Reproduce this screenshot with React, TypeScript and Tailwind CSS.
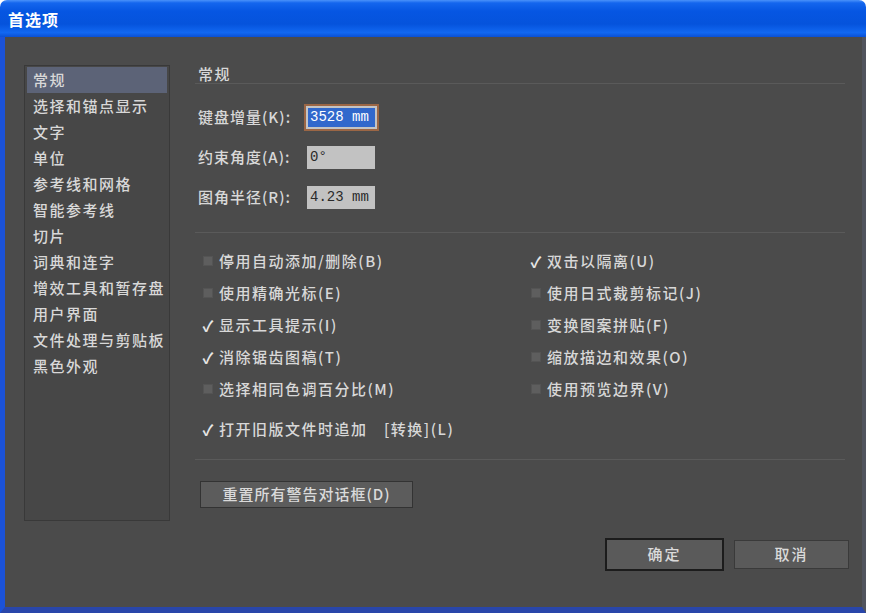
import React from "react";

const font = { fontFamily: '"Noto Sans CJK SC", "Noto Sans", sans-serif' };

const sideItems = [
  "常规",
  "选择和锚点显示",
  "文字",
  "单位",
  "参考线和网格",
  "智能参考线",
  "切片",
  "词典和连字",
  "增效工具和暂存盘",
  "用户界面",
  "文件处理与剪贴板",
  "黑色外观",
];

const leftChecks: [string, boolean][] = [
  ["停用自动添加/删除(B)", false],
  ["使用精确光标(E)", false],
  ["显示工具提示(I)", true],
  ["消除锯齿图稿(T)", true],
  ["选择相同色调百分比(M)", false],
];
const rightChecks: [string, boolean][] = [
  ["双击以隔离(U)", true],
  ["使用日式裁剪标记(J)", false],
  ["变换图案拼贴(F)", false],
  ["缩放描边和效果(O)", false],
  ["使用预览边界(V)", false],
];

function Check({ label, checked }: { label: string; checked: boolean }) {
  return (
    <div className="flex h-[32px] items-center">
      <div className="flex w-[18px] items-center justify-center">
        {checked ? (
          <span className="text-[15px] font-bold leading-none text-[#e6e6e6]">✓</span>
        ) : (
          <div className="h-[10px] w-[10px] border border-[#545454] bg-[#5e5e5e]" />
        )}
      </div>
      <span className="ml-[2px] text-[15px] font-medium tracking-[1.5px] text-[#d8d8d8]">{label}</span>
    </div>
  );
}

export default function App() {
  return (
    <div className="flex h-[613px] w-[874px] bg-white" style={font}>
      <div className="flex h-full w-[866px] flex-col">
        {/* Title bar */}
        <div
          className="flex h-[37px] items-center rounded-t-[7px] pl-[8px]"
          style={{
            background:
              "linear-gradient(to bottom, #4a92fa 0%, #1466ee 8%, #0656e2 30%, #0553dc 65%, #1168f2 88%, #0a50d4 100%)",
          }}
        >
          <span className="text-[16px] font-bold tracking-[1px] text-white">首选项</span>
        </div>
        {/* Body */}
        <div className="flex flex-1 flex-col border-b-[6px] border-l-[5px] border-r-[4px] border-b-[#2946aa] border-l-[#1b52d8] border-r-[#51545e] bg-[#4b4b4b]">
          <div className="flex pl-[19px] pt-[28px]">
            {/* Sidebar */}
            <div className="h-[456px] w-[146px] border border-[#393939] bg-[#474747] px-[2px] pt-[1px]">
              {sideItems.map((t, i) => (
                <div
                  key={t}
                  className={
                    "flex h-[26px] items-center pl-[6px] text-[15px] font-medium tracking-[1.5px] text-[#d8d8d8] " +
                    (i === 0 ? "bg-[#5c6377]" : "")
                  }
                >
                  {t}
                </div>
              ))}
            </div>
            {/* Panel */}
            <div className="ml-[25px] flex w-[650px] flex-col">
              <div className="h-[19px] border-b border-[#5a5a5a] pl-[3px] text-[15px] font-medium leading-[18px] tracking-[1.5px] text-[#d8d8d8]">
                常规
              </div>
              <div className="mt-[20px] flex flex-col gap-[13px] pl-[3px]">
                <div className="flex h-[27px] items-center">
                  <span className="w-[106px] text-[15px] font-medium tracking-[1px] text-[#d8d8d8]">键盘增量(K):</span>
                  <div className="flex h-[27px] w-[75px] items-center border-[2px] border-[#9b6645] bg-[#c4c4c4] p-[2px]">
                    <span
                      className="flex h-full w-full items-center bg-[#3168cc] pl-[2px] text-[14px] text-white"
                      style={{ fontFamily: '"Liberation Mono", monospace' }}
                    >
                      3528 mm
                    </span>
                  </div>
                </div>
                <div className="flex h-[27px] items-center">
                  <span className="w-[109px] text-[15px] font-medium tracking-[1px] text-[#d8d8d8]">约束角度(A):</span>
                  <div
                    className="flex h-[23px] w-[68px] items-center bg-[#c2c2c2] pl-[3px] text-[14px] text-[#2a2a2a]"
                    style={{ fontFamily: '"Liberation Mono", monospace' }}
                  >
                    0°
                  </div>
                </div>
                <div className="flex h-[27px] items-center">
                  <span className="w-[109px] text-[15px] font-medium tracking-[1px] text-[#d8d8d8]">图角半径(R):</span>
                  <div
                    className="flex h-[23px] w-[68px] items-center bg-[#c2c2c2] pl-[3px] text-[14px] text-[#2a2a2a]"
                    style={{ fontFamily: '"Liberation Mono", monospace' }}
                  >
                    4.23 mm
                  </div>
                </div>
              </div>
              <div className="mt-[21px] border-t border-[#5a5a5a]" />
              <div className="mt-[12px] flex pl-[4px]">
                <div className="flex w-[328px] flex-col">
                  {leftChecks.map(([l, c]) => (
                    <Check key={l} label={l} checked={c} />
                  ))}
                </div>
                <div className="flex flex-col">
                  {rightChecks.map(([l, c]) => (
                    <Check key={l} label={l} checked={c} />
                  ))}
                </div>
              </div>
              <div className="mt-[8px] pl-[4px]">
                <Check label="打开旧版文件时追加　[转换](L)" checked={true} />
              </div>
              <div className="mt-[14px] border-t border-[#5a5a5a]" />
              <div className="mt-[21px] pl-[5px]">
                <button className="flex h-[27px] w-[213px] items-center justify-center border border-[#333] bg-[#5c5c5c] text-[15px] font-medium tracking-[1px] text-[#dadada]">
                  重置所有警告对话框(D)
                </button>
              </div>
            </div>
          </div>
          {/* Footer */}
          <div className="mt-[17px] flex justify-end gap-[10px] pr-[13px]">
            <button className="flex h-[33px] w-[119px] items-center justify-center border-[2px] border-[#1c1c1c] bg-[#5a5a5a] text-[15px] font-medium tracking-[2px] text-[#dadada]">
              确定
            </button>
            <button className="mt-[2px] flex h-[29px] w-[115px] items-center justify-center border border-[#3a3a3a] bg-[#5a5a5a] text-[15px] font-medium tracking-[2px] text-[#dadada]">
              取消
            </button>
          </div>
        </div>
      </div>
    </div>
  );
}
